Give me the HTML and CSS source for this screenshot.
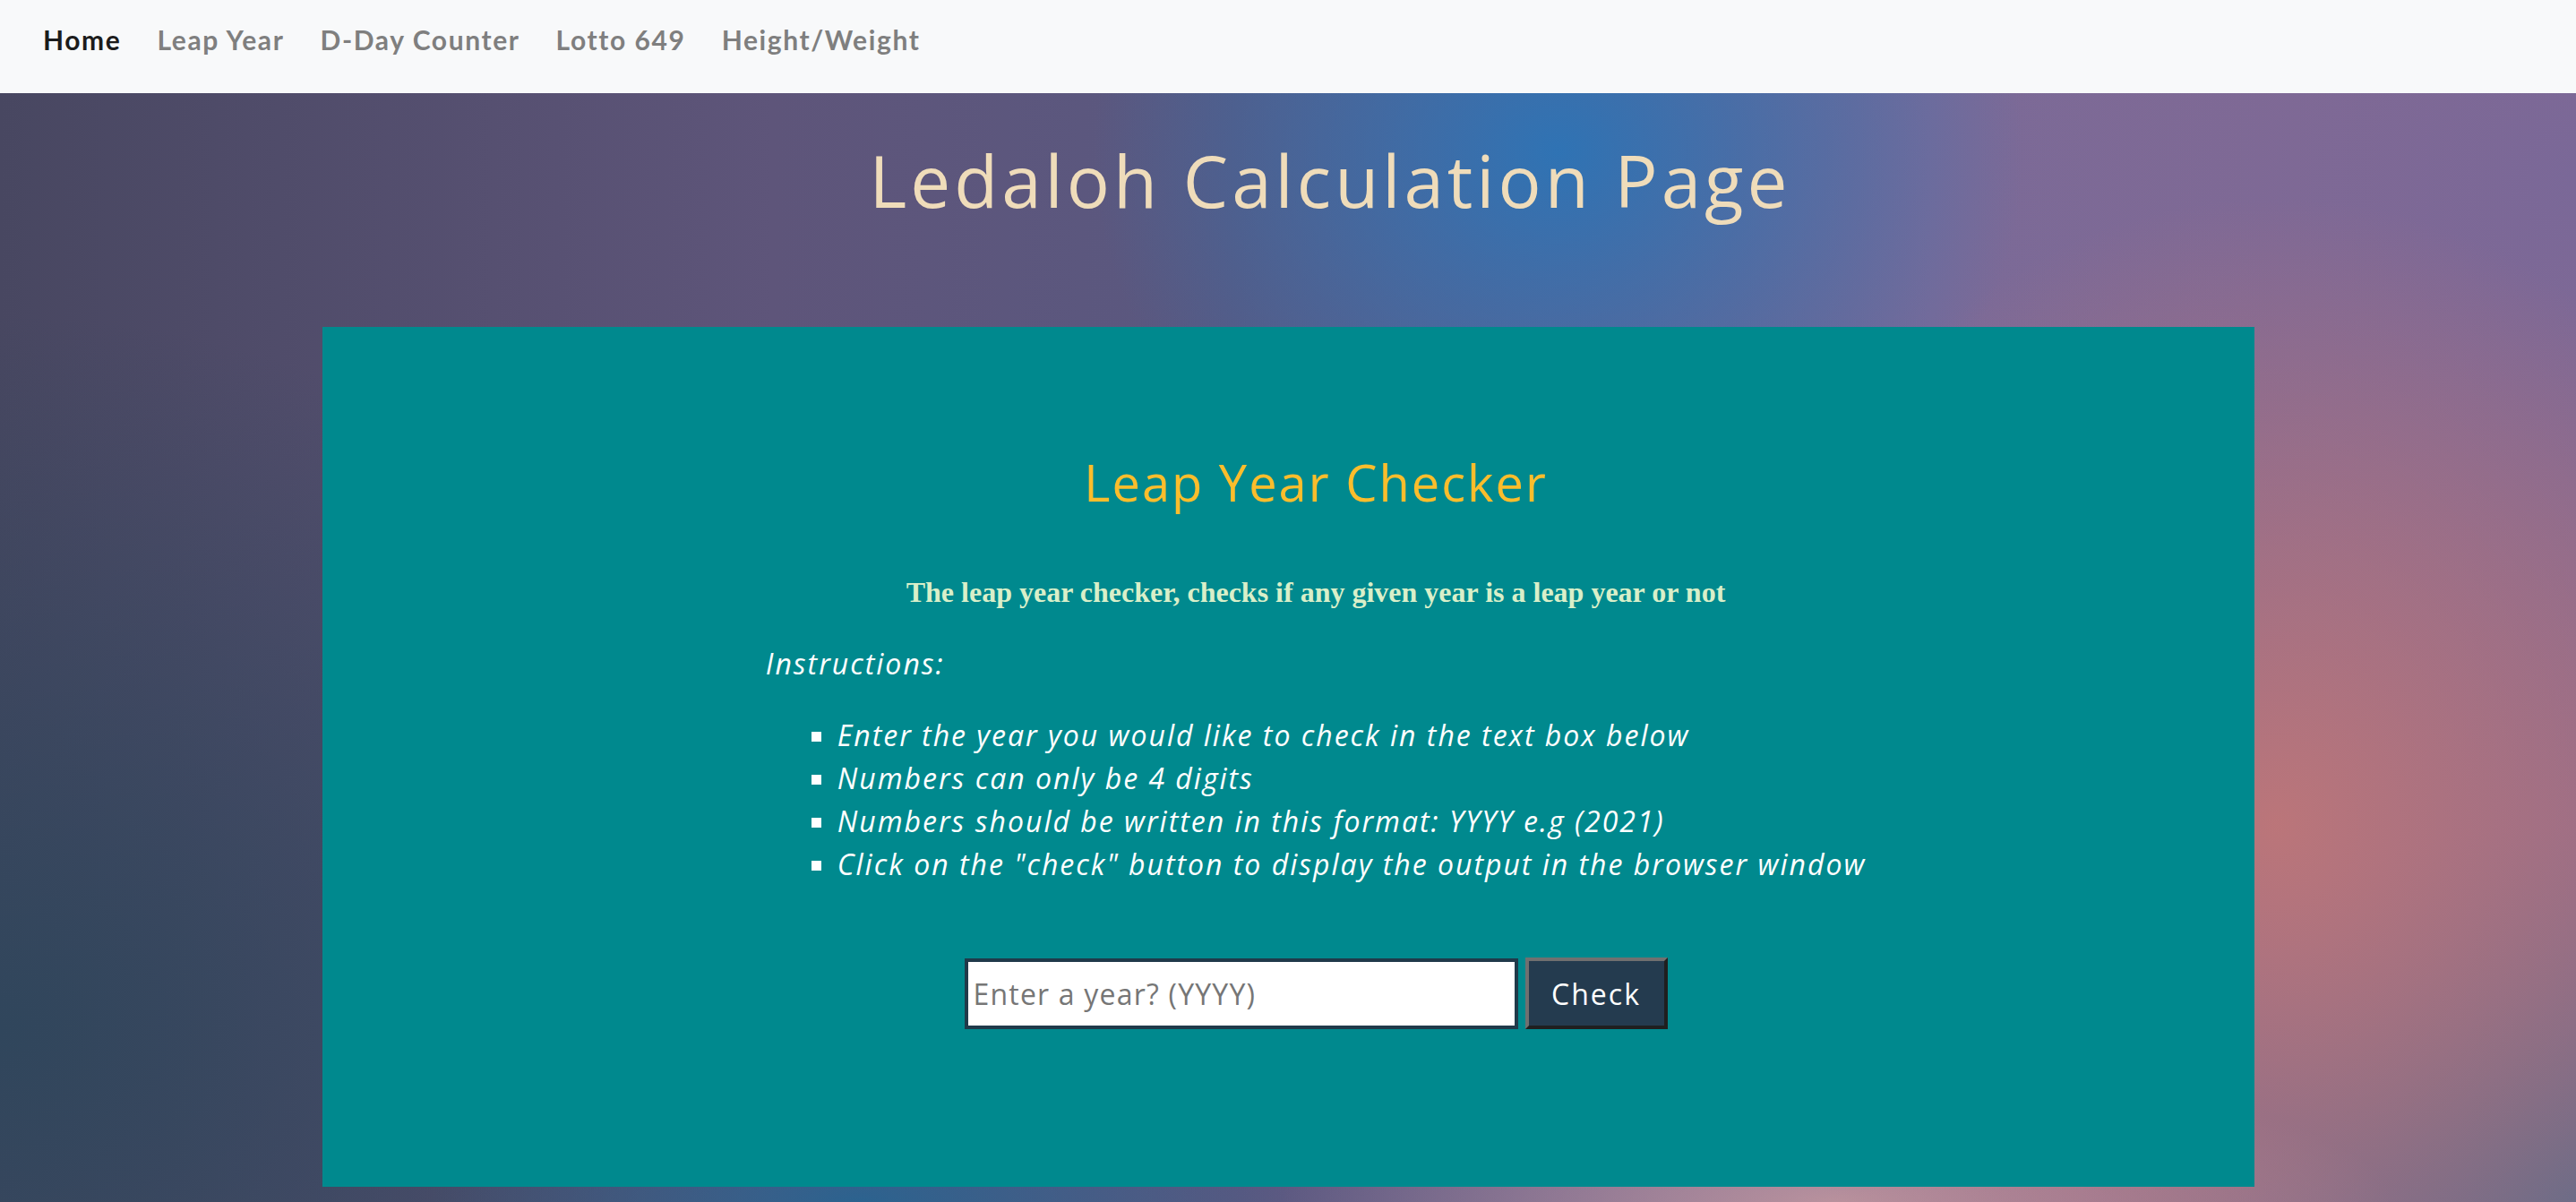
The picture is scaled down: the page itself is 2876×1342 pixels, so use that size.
FILE: index.html
```html
<!DOCTYPE html>
<html lang="en">
<head>
<meta charset="utf-8">
<title>Ledaloh Calculation Page</title>
<link rel="stylesheet" href="styles.css">
</head>
<body>
<nav class="navbar">
  <a class="nav-link active" href="#">Home</a>
  <a class="nav-link" href="#">Leap Year</a>
  <a class="nav-link" href="#">D-Day Counter</a>
  <a class="nav-link" href="#">Lotto 649</a>
  <a class="nav-link" href="#">Height/Weight</a>
</nav>
<main class="page">
  <header class="hero">
    <h1 class="page-title">Ledaloh Calculation Page</h1>
  </header>
  <section class="card">
    <h2 class="card-title">Leap Year Checker</h2>
    <p class="lead">The leap year checker, checks if any given year is a leap year or not</p>
    <div class="instructions">
      <p class="instr-label">Instructions:</p>
      <ul class="instr-list">
        <li>Enter the year you would like to check in the text box below</li>
        <li>Numbers can only be 4 digits</li>
        <li>Numbers should be written in this format: YYYY e.g (2021)</li>
        <li>Click on the "check" button to display the output in the browser window</li>
      </ul>
    </div>
    <form class="year-form">
      <input class="year-input" type="text" placeholder="Enter a year? (YYYY)">
      <button class="check-btn" type="button">Check</button>
    </form>
  </section>
</main>
</body>
</html>
```
FILE: styles.css
```css
* { box-sizing: border-box; }
html, body { margin: 0; padding: 0; }
body {
  min-height: 100vh;
  font-family: "Open Sans", "Liberation Sans", sans-serif;
  background-color: #4d4b68;
  background-image:
    radial-gradient(ellipse 520px 460px at 1740px 170px, rgba(44,116,182,0.95), rgba(44,116,182,0) 100%),
    radial-gradient(ellipse 620px 700px at 2540px 920px, rgba(190,118,120,0.95), rgba(190,118,120,0) 100%),
    radial-gradient(ellipse 620px 150px at 2050px 1342px, rgba(192,150,158,0.9), rgba(192,150,158,0) 100%),
    radial-gradient(ellipse 480px 150px at 960px 1342px, rgba(38,100,145,0.9), rgba(38,100,145,0) 100%),
    radial-gradient(ellipse 700px 700px at 2876px 200px, rgba(122,104,152,1), rgba(122,104,152,0) 100%),
    radial-gradient(ellipse 560px 420px at 2876px 1342px, rgba(92,106,138,1), rgba(92,106,138,0) 100%),
    radial-gradient(ellipse 900px 800px at 0px 1150px, rgba(48,70,92,1), rgba(48,70,92,0) 100%),
    linear-gradient(90deg, #484761 0%, #5e557a 30%, #5a5880 48%, #7a6a98 75%, #8a6a8e 100%);
  background-repeat: no-repeat;
}

.navbar {
  height: 104px;
  background: #f8f9fa;
  display: flex;
  align-items: center;
  gap: 40px;
  padding: 0 0 16px 48px;
}
.nav-link {
  font-family: "Lato", "Liberation Sans", sans-serif;
  font-weight: 700;
  font-size: 30px;
  letter-spacing: 1.6px;
  color: #7f7f7f;
  text-decoration: none;
  line-height: 1;
}
.nav-link.active { color: #1c1c1c; }

.hero {
  padding-left: 94px;
  text-align: center;
}
.page-title {
  margin: 49px 0 116px;
  font-family: "Open Sans", "Liberation Sans", sans-serif;
  font-weight: 400;
  font-size: 80px;
  line-height: 96px;
  letter-spacing: 4px;
  color: #efdcba;
}

.card {
  width: 75%;
  margin: 0 auto;
  background: #00898e;
  padding: 140px 0 176px 62px;
  text-align: center;
}
.card-title {
  margin: 0 0 65px;
  font-family: "Open Sans", "Liberation Sans", sans-serif;
  font-weight: 400;
  font-size: 56px;
  line-height: 67px;
  letter-spacing: 2px;
  color: #fbbd2c;
}
.lead {
  margin: 0 0 32px;
  font-family: "Liberation Serif", "Times New Roman", serif;
  font-weight: 700;
  font-size: 32px;
  line-height: 48px;
  color: #d9efc9;
}
.instructions {
  width: fit-content;
  margin: 0 auto;
  text-align: left;
  color: #ffffff;
  font-style: italic;
  font-size: 32px;
  line-height: 48px;
  letter-spacing: 2px;
}
.instr-label { margin: 0 0 32px; }
.instr-list {
  margin: 0 0 32px;
  padding-left: 80px;
  list-style: square;
}

.year-form {
  margin-top: 80px;
  display: flex;
  justify-content: center;
  align-items: center;
  gap: 8px;
}
.year-input {
  width: 618px;
  height: 79px;
  border: 4px solid #203a4a;
  background: #ffffff;
  padding: 0 6px;
  font-family: "Open Sans", "Liberation Sans", sans-serif;
  font-size: 32px;
  letter-spacing: 1.2px;
  color: #222;
}
.year-input::placeholder { color: #767676; }
.check-btn {
  width: 159px;
  height: 80px;
  background: #243b4f;
  color: #ffffff;
  font-family: "Open Sans", "Liberation Sans", sans-serif;
  font-size: 32px;
  letter-spacing: 2px;
  border-style: solid;
  border-width: 4px;
  border-color: #707070 #1f1f1f #1f1f1f #707070;
  padding: 0;
}
```
